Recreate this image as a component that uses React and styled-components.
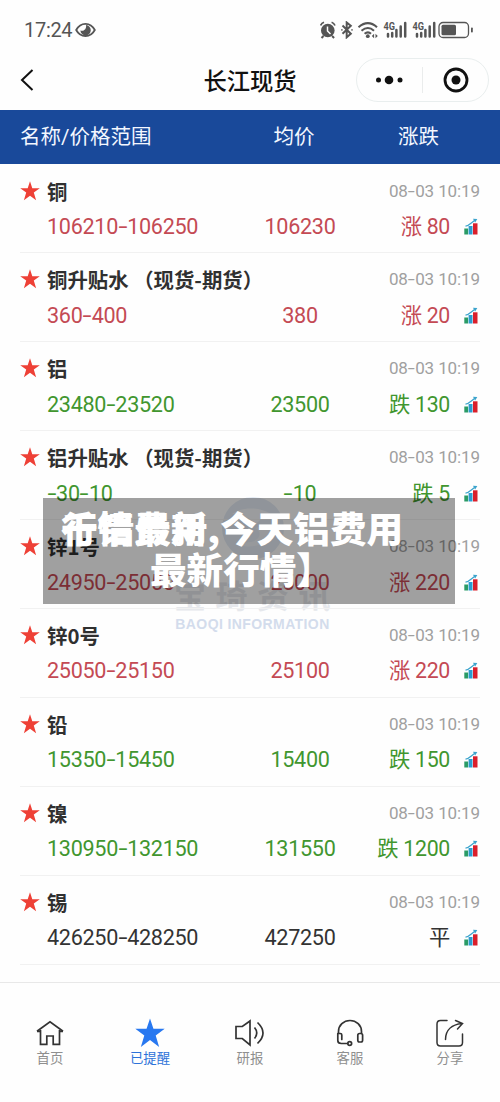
import React from "react";
import styled, { createGlobalStyle } from "styled-components";

const rows = [
  { name: "铜", range: "106210-106250", avg: "106230", change: "涨 80", trend: "up" },
  { name: "铜升贴水 （现货-期货）", range: "360-400", avg: "380", change: "涨 20", trend: "up" },
  { name: "铝", range: "23480-23520", avg: "23500", change: "跌 130", trend: "down" },
  { name: "铝升贴水 （现货-期货）", range: "-30-10", avg: "-10", change: "跌 5", trend: "down" },
  { name: "锌1号", range: "24950-25050", avg: "25000", change: "涨 220", trend: "up" },
  { name: "锌0号", range: "25050-25150", avg: "25100", change: "涨 220", trend: "up" },
  { name: "铅", range: "15350-15450", avg: "15400", change: "跌 150", trend: "down" },
  { name: "镍", range: "130950-132150", avg: "131550", change: "跌 1200", trend: "down" },
  { name: "锡", range: "426250-428250", avg: "427250", change: "平", trend: "flat" },
];

const trendColors = { up: "#c44a54", down: "#41962f", flat: "#333333" };

const GlobalStyle = createGlobalStyle`
  * {
    box-sizing: border-box;
  }
  body {
    margin: 0;
    background: #fefefe;
    font-family: Roboto, "Noto Sans CJK SC", sans-serif;
  }
`;

const Screen = styled.div`
  position: relative;
  width: 500px;
  height: 1102px;
  overflow: hidden;
  display: flex;
  flex-direction: column;
  background: #fefefe;
`;

const StatusBar = styled.div`
  height: 50px;
  padding: 9px 25px 0 24px;
  display: flex;
  align-items: center;
  justify-content: space-between;
  color: #555;
`;

const Clock = styled.div`
  display: flex;
  align-items: center;
  gap: 3px;
  font-size: 20px;
  letter-spacing: -0.3px;
`;

const TitleBar = styled.div`
  height: 60px;
  padding: 0 11px 0 20px;
  display: grid;
  grid-template-columns: 133px 1fr 133px;
  align-items: center;
`;

const Title = styled.h1`
  margin: 0;
  padding: 0 9px 1px 0;
  text-align: center;
  font-size: 23.3px;
  line-height: 34px;
  font-weight: 500;
  color: #111;
  font-family: "Noto Sans CJK SC", sans-serif;
`;

const Capsule = styled.div`
  height: 44px;
  border: 1px solid #e9eeee;
  border-radius: 22px;
  display: flex;
  align-items: center;
`;

const CapsuleHalf = styled.div`
  flex: 1;
  height: 26px;
  display: flex;
  align-items: center;
  justify-content: center;
  border-left: ${(p) => (p.$divided ? "1px solid #eaecec" : "none")};
`;

const TableHead = styled.div`
  height: 54px;
  display: flex;
  align-items: center;
  padding: 0 20px 4px;
  background: #19499a;
  color: #f3f7ff;
  font-size: 20.5px;
`;

const HeadCell = styled.div`
  width: ${(p) => p.$width}px;
  text-align: ${(p) => p.$align || "left"};
`;

const List = styled.div`
  position: relative;
  height: 818px;
  padding: 0.5px 20px 0;
  overflow: hidden;
`;

const Row = styled.div`
  position: relative;
  height: 88.9px;
  padding-top: 10px;
  border-bottom: 1px solid #f1f1f1;
`;

const RowTop = styled.div`
  height: 32px;
  display: flex;
  align-items: center;
`;

const Name = styled.div`
  flex: 1;
  margin-left: 7px;
  font: 700 20.4px/32px "Noto Sans CJK SC", sans-serif;
  color: #303030;
  white-space: pre;
`;

const Time = styled.div`
  color: #a0a0a0;
  font-size: 17px;
  letter-spacing: -0.1px;
`;

const RowValues = styled.div`
  height: 38px;
  padding: 2px 2px 0 27px;
  display: flex;
  align-items: center;
  color: ${(p) => trendColors[p.$trend]};
  font-size: 21.6px;
  letter-spacing: -0.3px;
`;

const Cell = styled.div`
  width: ${(p) => p.$width}px;
  text-align: ${(p) => p.$align || "left"};
  line-height: 35px;
  white-space: nowrap;
`;

const Change = styled(Cell)`
  width: 100px;
  text-align: right;
  font-size: 21.3px;
`;

const Hyphen = styled.span`
  display: inline-block;
  margin: 0 0.09em 0 0.07em;
  transform: scaleX(1.5);
`;

const ChartSlot = styled.div`
  flex: 1;
  display: flex;
  justify-content: flex-end;
`;

const Watermark = styled.div`
  position: absolute;
  left: 172px;
  top: 331px;
  width: 161px;
  display: flex;
  flex-direction: column;
  align-items: center;
`;

const WatermarkName = styled.div`
  margin-top: 15px;
  padding-left: 9px;
  font: 700 32px/36px "Noto Sans CJK SC", sans-serif;
  letter-spacing: 9.5px;
  color: #e6e8ec;
  white-space: nowrap;
`;

const WatermarkLatin = styled.div`
  margin-top: 4px;
  font: 700 14px/16px "Liberation Sans", sans-serif;
  letter-spacing: 0.4px;
  color: #d3dcec;
  white-space: nowrap;
`;

const Caption = styled.div`
  position: absolute;
  left: 43px;
  top: 498px;
  width: 412px;
  height: 106px;
  padding: 8px 0 0 18px;
  background: rgba(0, 0, 0, 0.37);
  color: #fff;
  font: 900 36.6px/43px "Noto Sans CJK SC", sans-serif;
`;

const CaptionLine = styled.div`
  height: 41px;
  padding-left: ${(p) => p.$indent || 0}px;
  display: grid;
  white-space: nowrap;

  > span {
    grid-area: 1 / 1;
  }
`;

const TabBar = styled.nav`
  flex: 1;
  display: grid;
  grid-template-columns: repeat(5, 1fr);
  align-items: start;
  padding-top: 35px;
  border-top: 1px solid #e8e8e8;
  background: #fefefe;
`;

const Tab = styled.div`
  display: flex;
  flex-direction: column;
  align-items: center;
  color: ${(p) => (p.$active ? "#2d72d9" : "#8f8f8f")};
  font: 400 13.4px/18px "Noto Sans CJK SC", sans-serif;
`;

const Num = ({ children }) =>
  children
    .split(/(-)/)
    .map((part, i) => (part === "-" ? <Hyphen key={i}>-</Hyphen> : part));

const Star = ({ size, color }) => (
  <svg width={size} height={size} viewBox="0 0 20 20">
    <path
      fill={color}
      d="M10 .3l2.300 6.900h7.500l-6 4.400 2.300 7.700L10 14.700l-6.100 4.600 2.300-7.700L.2 7.200h7.500z"
    />
  </svg>
);

const ChartIcon = () => (
  <svg width="14" height="17" viewBox="0 0 14 17">
    <rect x="0.3" y="10.5" width="3.8" height="6" fill="#2a9b66" />
    <rect x="4.6" y="8" width="3.9" height="8.5" fill="#2b9cd0" />
    <rect x="9" y="5.3" width="4.500" height="11.2" fill="#da1f2b" />
    <path d="M1.500 8.200C5 7.800 7 5 10.500 2.500" fill="none" stroke="#3aa3cc" strokeWidth="1.2" />
    <path d="M9 .7l4.3.2-2.2 3.6z" fill="#3aa3cc" />
  </svg>
);

const EyeIcon = () => (
  <svg width="21" height="16" viewBox="0 0 21 16">
    <path d="M1.2 8C5.5-.3 15.500-.3 19.800 8C15.500 16 5.500 16 1.200 8z" fill="none" stroke="#555" strokeWidth="1.8" />
    <path d="M11 3a5.200 5.200 0 1 1-5.600 5.500c3 1.300 6.500-1.500 5.600-5.500z" fill="#555" />
  </svg>
);

const Signal = ({ x }) => (
  <g transform={`translate(${x} 0)`}>
    <text x="0" y="8.500" fontSize="10" fontWeight="700" textLength="11.500" lengthAdjust="spacingAndGlyphs">
      4G
    </text>
    <path d="M4.500 15.500v-2.500M8.700 15.500v-3.500M12.900 15.500v-6.500M17.200 15.500v-10M21.700 15.500v-13.500" stroke="#555" strokeWidth="2.500" strokeLinecap="round" />
  </g>
);

const StatusIcons = () => (
  <svg width="155" height="18" viewBox="0 0 155 18" fill="#555">
    <circle cx="7.800" cy="9.500" r="6.800" />
    <path d="M3.500 15l-2 2M12.100 15l2 2" stroke="#555" strokeWidth="2" />
    <path d="M.6 4.500Q1.500 2 4 1.200M15 4.500Q14 2 11.600 1.200" fill="none" stroke="#555" strokeWidth="1.700" />
    <path d="M7.500 5.500V10l3 3" fill="none" stroke="#fefefe" strokeWidth="1.500" />
    <path d="M22.500 4.500L30.800 12.700L26.700 16.300V1.500L30.800 4.800L22.500 12.800" fill="none" stroke="#555" strokeWidth="2" />
    <path d="M31.400 8.800h1.200M21.300 8.800h1.200" stroke="#555" strokeWidth="1.700" />
    <path d="M38.500 6.200Q48 -1.800 57 6.200M41.500 9.700Q48 4.300 54 9.700M44.600 12.800Q48 9.900 51 12.800" fill="none" stroke="#555" strokeWidth="2.100" />
    <circle cx="47.800" cy="15.200" r="1.900" />
    <path d="M51.800 15l2.300-2.300v4.600zM57.800 15l-2.300-2.300v4.600z" />
    <Signal x={63.500} />
    <Signal x={92.500} />
    <rect x="119" y="1.500" width="29.500" height="15" rx="4" fill="none" stroke="#555" strokeWidth="1.300" />
    <rect x="121.500" y="3.700" width="14.500" height="10.600" rx="1.500" />
    <rect x="151" y="6.500" width="1.800" height="5" rx=".8" />
  </svg>
);

const WatermarkLogo = () => (
  <svg width="66" height="66" viewBox="0 0 66 66">
    <circle cx="33" cy="33" r="31" fill="#e4ebf4" />
    <path d="M12 19C24 10 43 13 52 20C44 21 40 25 36 29C31 23 21 19 12 19z" fill="#f6f8fb" />
    <path d="M15 48C24 54 43 52 51 43C56 35 47 29 35 33C43 37 40 45 31 47C26 48 20 48 15 48z" fill="#f0f3f8" />
  </svg>
);

const lineIcon = {
  width: 30,
  height: 30,
  viewBox: "0 0 30 30",
  fill: "none",
  stroke: "#333",
  strokeWidth: 1.7,
};

const HomeIcon = () => (
  <svg {...lineIcon}>
    <path d="M2 13.300L15 3.800l13 9.500M5.500 12v14.300h6.300V18h6.400v8.300h6.300V12" />
    <path d="M2 13.300h3.500M24.500 13.300H28" />
  </svg>
);

const SpeakerIcon = () => (
  <svg {...lineIcon}>
    <path d="M1 8.500h6.300L15 3v24l-7.700-6.500H1z" />
    <path d="M19.500 9.500q4.500 5.300 0 11M22.500 4.500q11 10.500 0 21" />
  </svg>
);

const HeadsetIcon = () => (
  <svg {...lineIcon} strokeLinecap="round">
    <path d="M3.500 15v-1.500a11.500 11 0 0 1 23 0V15" />
    <path d="M2.800 15.500h2.500a1.500 1.500 0 0 1 1.500 1.500v4.500M2.800 15.500v7q0 3 3.500 3h6.500" />
    <rect x="22.800" y="15.500" width="4.800" height="8.500" rx="1.700" />
    <circle cx="14.700" cy="25.500" r="1.900" />
  </svg>
);

const ShareIcon = () => (
  <svg {...lineIcon} strokeWidth="1.500" strokeLinecap="round">
    <path d="M12 2.500H5.500q-3.500 0-3.500 3.500v18.500q0 3.500 3.500 3.500h18.500q3.500 0 3.500-3.500v-8.500" />
    <path d="M10.500 21.500C10.500 12 17 6.500 27 5.500M20.500 2.500l7 3-5 5.500" />
  </svg>
);

const tabs = [
  { label: "首页", icon: <HomeIcon /> },
  { label: "已提醒", icon: <Star size={30} color="#2878f0" />, active: true },
  { label: "研报", icon: <SpeakerIcon /> },
  { label: "客服", icon: <HeadsetIcon /> },
  { label: "分享", icon: <ShareIcon /> },
];

const App = () => {
  return (
    <Screen>
      <GlobalStyle />
      <StatusBar>
        <Clock>
          17:24
          <EyeIcon />
        </Clock>
        <StatusIcons />
      </StatusBar>
      <TitleBar>
        <svg width="14" height="22" viewBox="0 0 14 22" fill="none" stroke="#111" strokeWidth="2">
          <path d="M12.500 1L2 11l10.500 10" />
        </svg>
        <Title>长江现货</Title>
        <Capsule>
          <CapsuleHalf>
            <svg width="28" height="10" viewBox="0 0 28 10" fill="#111">
              <circle cx="2.500" cy="5" r="2.500" />
              <circle cx="13" cy="5" r="4.300" />
              <circle cx="24" cy="5" r="2.500" />
            </svg>
          </CapsuleHalf>
          <CapsuleHalf $divided>
            <svg width="26" height="26" viewBox="0 0 26 26" fill="#111">
              <circle cx="13" cy="13" r="11" fill="none" stroke="#111" strokeWidth="2.800" />
              <circle cx="13" cy="13" r="4.500" />
            </svg>
          </CapsuleHalf>
        </Capsule>
      </TitleBar>
      <TableHead>
        <HeadCell $width={224}>名称/价格范围</HeadCell>
        <HeadCell $width={100} $align="center">均价</HeadCell>
        <HeadCell $width={95} $align="right">涨跌</HeadCell>
      </TableHead>
      <List>
        <Watermark>
          <WatermarkLogo />
          <WatermarkName>宝琦资讯</WatermarkName>
          <WatermarkLatin>BAOQI INFORMATION</WatermarkLatin>
        </Watermark>
        {rows.map((row) => (
          <Row key={row.name}>
            <RowTop>
              <Star size={20} color="#ee4036" />
              <Name>{row.name}</Name>
              <Time>
                <Num>08-03 10:19</Num>
              </Time>
            </RowTop>
            <RowValues $trend={row.trend}>
              <Cell $width={203}>
                <Num>{row.range}</Num>
              </Cell>
              <Cell $width={100} $align="center">
                <Num>{row.avg}</Num>
              </Cell>
              <Change>{row.change}</Change>
              <ChartSlot>
                <ChartIcon />
              </ChartSlot>
            </RowValues>
          </Row>
        ))}
      </List>
      <TabBar>
        {tabs.map((tab) => (
          <Tab key={tab.label} $active={tab.active}>
            {tab.icon}
            {tab.label}
          </Tab>
        ))}
      </TabBar>
      <Caption>
        <CaptionLine>
          <span>千铝费用,今天铝费用</span>
          <span>行情最新</span>
        </CaptionLine>
        <CaptionLine $indent={89}>最新行情】</CaptionLine>
      </Caption>
    </Screen>
  );
};

export default App;
